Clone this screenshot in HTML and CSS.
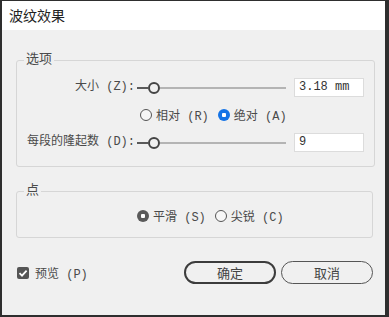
FILE: index.html
```html
<!DOCTYPE html>
<html lang="zh-CN">
<head>
    <meta charset="UTF-8">
    <title>波纹效果</title>
    <link rel="stylesheet" href="styles.css">
</head>
<body>
    <div class="window">
        <div class="titlebar">波纹效果</div>

        <fieldset class="group group-options">
            <legend>选项</legend>
            <div class="grid">
                <label class="field-label">大小 (Z):</label>
                <div class="slider">
                    <span class="fill"></span><span class="knob"></span><span class="rest"></span>
                </div>
                <div class="input">3.18 mm</div>

                <div class="radios radios-inline">
                    <span class="radio"></span><span class="radio-text">相对 (R)</span>
                    <span class="radio on blue"></span><span class="radio-text">绝对 (A)</span>
                </div>

                <label class="field-label">每段的隆起数 (D):</label>
                <div class="slider">
                    <span class="fill"></span><span class="knob"></span><span class="rest"></span>
                </div>
                <div class="input">9</div>
            </div>
        </fieldset>

        <fieldset class="group group-points">
            <legend>点</legend>
            <div class="radios radios-points">
                <span class="radio on"></span><span class="radio-text">平滑 (S)</span>
                <span class="radio"></span><span class="radio-text">尖锐 (C)</span>
            </div>
        </fieldset>

        <div class="footer">
            <div class="check">
                <span class="box">
                    <svg width="12" height="12" viewBox="0 0 12 12"><path d="M2.5 6.2 L5 8.6 L9.6 3.6" fill="none" stroke="#fff" stroke-width="1.8"/></svg>
                </span>
                <span>预览 (P)</span>
            </div>
            <div class="buttons">
                <button class="btn btn-default">确定</button>
                <button class="btn">取消</button>
            </div>
        </div>
    </div>
</body>
</html>
```

FILE: styles.css
```css
* {
    box-sizing: border-box;
    margin: 0;
    padding: 0;
}

body {
    background: #2e2e2e;
    font-family: "Liberation Mono", "Noto Sans CJK SC", monospace;
    font-size: 12px;
    color: #4a4a4a;
    overflow: hidden;
}

.window {
    width: 383px;
    height: 314px;
    margin: 1px 0 0 2px;
    background: #f0f0f0;
}

.titlebar {
    height: 29px;
    line-height: 29px;
    padding-left: 7px;
    background: #fff;
    font-family: "Noto Sans CJK SC", sans-serif;
    font-size: 14px;
    color: #222;
}

.group {
    width: 357px;
    margin-left: 14px;
    border: 1px solid #d6d6d6;
    border-radius: 3px;
    padding: 10px 10px 14px;
}

.group legend {
    margin-left: -3px;
    padding: 0 2px;
    line-height: 16px;
    font-size: 13px;
}

.group-options {
    margin-top: 22px;
}

.group-points {
    margin-top: 16px;
    padding: 7px 10px 11px;
}

.grid {
    display: grid;
    grid-template-columns: 108px 149px 76px;
    column-gap: 2px;
    row-gap: 8px;
    align-items: center;
}

.field-label {
    text-align: right;
    line-height: 19px;
    white-space: nowrap;
}

.slider {
    display: flex;
    align-items: center;
    height: 12px;
}

.slider .fill {
    width: 11px;
    height: 2px;
    background: #5a5a5a;
}

.slider .knob {
    width: 12px;
    height: 12px;
    border: 2px solid #444;
    border-radius: 50%;
    background: #f0f0f0;
}

.slider .rest {
    flex: 1;
    height: 2px;
    background: #b4b4b4;
}

.input {
    justify-self: end;
    width: 70px;
    height: 19px;
    line-height: 17px;
    padding-left: 4px;
    background: #fff;
    border: 1px solid #dcdcdc;
    color: #333;
}

.radios {
    display: flex;
    align-items: center;
    height: 20px;
}

.radios-inline {
    grid-column: 2 / 4;
    padding-left: 3px;
}

.radios-points {
    padding-left: 110px;
}

.radio {
    width: 12px;
    height: 12px;
    border: 1.5px solid #555;
    border-radius: 50%;
    background: #f7f7f7;
    margin-right: 4px;
}

.radio.on {
    border: none;
    background: radial-gradient(circle, #fff 0 2px, #5a5a5a 2.5px);
}

.radio.on.blue {
    background: radial-gradient(circle, #fff 0 2px, #1473e6 2.5px);
}

.radio-text {
    margin-right: 9px;
}

.footer {
    display: flex;
    justify-content: space-between;
    align-items: center;
    margin-top: 23px;
    padding: 0 12px 0 15px;
}

.check {
    display: flex;
    align-items: center;
    gap: 6px;
}

.check .box {
    width: 12px;
    height: 12px;
    border-radius: 2px;
    background: #555;
    display: flex;
}

.buttons {
    display: flex;
    gap: 5px;
}

.btn {
    width: 92px;
    height: 23px;
    border: 1px solid #555;
    border-radius: 12px;
    background: transparent;
    font-family: "Noto Sans CJK SC", sans-serif;
    font-size: 13px;
    color: #444;
}

.btn-default {
    border: 2px solid #3c3c3c;
}
```
